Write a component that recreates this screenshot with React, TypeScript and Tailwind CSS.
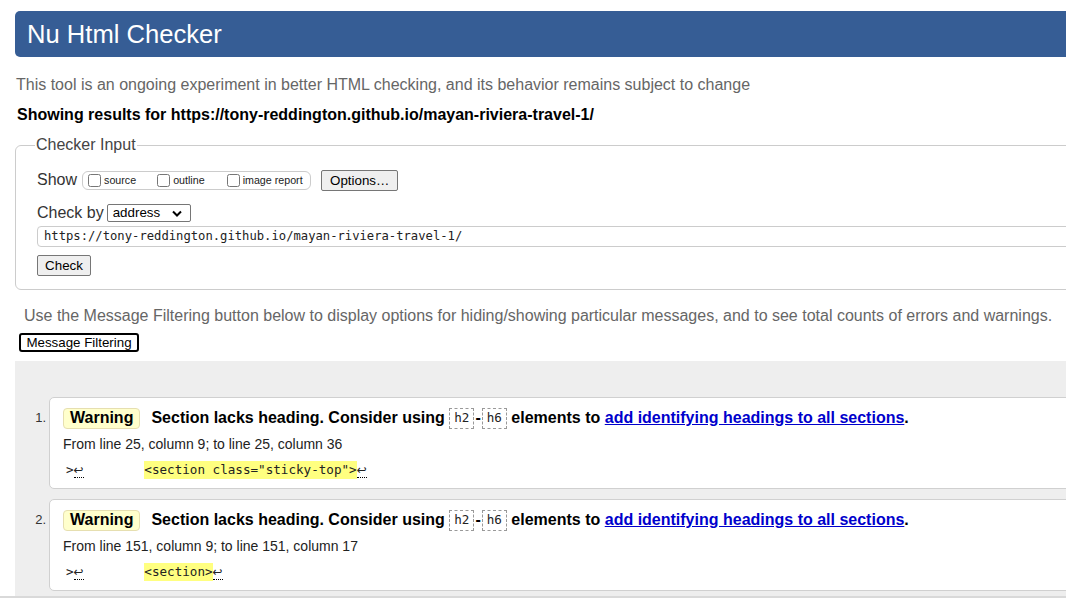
import React from "react";

const SANS = "font-['Liberation_Sans',Arial,sans-serif]";
const MONO = "font-['DejaVu_Sans_Mono',monospace]";

function Lf() {
  return (
    <span className="font-['DejaVu_Sans',sans-serif] text-[12px] border-b border-dotted border-black leading-[14px]">
      ↩
    </span>
  );
}

function Code({ children }: { children: React.ReactNode }) {
  return (
    <span
      className={`${MONO} inline-flex items-center h-[21px] px-[4px] border border-dashed border-[#999] text-[12.6px] font-normal text-[#222] bg-white`}
    >
      {children}
    </span>
  );
}

function Message({
  n,
  from,
  extract,
}: {
  n: number;
  from: string;
  extract: string;
}) {
  return (
    <div className="flex">
      <div className="w-[34px] shrink-0 pt-[8px]">
        <div className="h-[26px] flex items-center justify-end pr-[3px] text-[13px] text-[#333]">
          {n}.
        </div>
      </div>
      <div className="flex-1 mr-[-20px] bg-white border border-[#d0d0d0] rounded-l-[5px] pl-[13px] pt-[7px] pb-[5px]">
        <div className="h-[26px] flex items-center text-[16px] font-bold text-black whitespace-nowrap">
          <span className="inline-flex items-center h-[21px] px-[6px] bg-[#ffffcc] border border-[#e6dfb0] rounded-[4px]">
            Warning
          </span>
          <span className="ml-[11px]">Section lacks heading. Consider using&nbsp;</span>
          <Code>h2</Code>
          <span className="mx-[1px]">-</span>
          <Code>h6</Code>
          <span>&nbsp;elements to&nbsp;</span>
          <a className="text-[#0000cc] underline" href="#">
            add identifying headings to all sections
          </a>
          <span>.</span>
        </div>
        <div className="h-[26px] flex items-center text-[14px] text-[#222]">{from}</div>
        <div className={`h-[26px] flex items-center ${MONO} text-[12.6px] text-[#222] whitespace-pre pl-[3px]`}>
          <span>&gt;</span>
          <Lf />
          <span>{"        "}</span>
          <span className="bg-[#ffff80] leading-[18px]">{extract}</span>
          <Lf />
        </div>
      </div>
    </div>
  );
}

export default function App() {
  return (
    <div className={`${SANS} w-full h-[598px] overflow-hidden bg-white flex flex-col`}>
      <div className="flex-1 overflow-hidden">
        <div className="mt-[11px] ml-[15px] mr-[-20px] h-[46px] bg-[#365d95] rounded-l-[5px] pl-[12px] text-white text-[25.6px] leading-[46px]">
          Nu Html Checker
        </div>
        <p className="mt-[18px] ml-[16px] text-[16px] leading-[20px] text-[#666] whitespace-nowrap">
          This tool is an ongoing experiment in better HTML checking, and its behavior remains subject to change
        </p>
        <p className="mt-[10px] ml-[17px] text-[16px] leading-[20px] font-bold text-black whitespace-nowrap">
          Showing results for https://tony-reddington.github.io/mayan-riviera-travel-1/
        </p>
        <fieldset className="mt-[11px] ml-[15px] mr-[-20px] border border-[#cccccc] rounded-l-[6px] pl-[21px] pt-[15px] pb-[13px]">
          <legend className="-ml-[2px] px-[1px] text-[16px] leading-[18px] text-[#444]">Checker Input</legend>
          <div className="h-[22px] flex items-center">
            <span className="text-[16px] text-[#333]">Show</span>
            <div className="ml-[5px] h-[19px] w-[229px] shrink-0 border border-[#cccccc] rounded-[6px] flex items-center pl-[5px] text-[10.7px] text-[#222] whitespace-nowrap">
              <input type="checkbox" className="m-0 w-[13px] h-[13px] shrink-0" readOnly />
              <span className="ml-[3px]">source</span>
              <input type="checkbox" className="ml-[21px] w-[13px] h-[13px] shrink-0" readOnly />
              <span className="ml-[3px]">outline</span>
              <input type="checkbox" className="ml-[22px] w-[13px] h-[13px] shrink-0" readOnly />
              <span className="ml-[3px]">image report</span>
            </div>
            <button className="ml-[10px] h-[21px] px-[8px] bg-[#efefef] border border-[#767676] rounded-[2px] text-[13.33px] text-black">
              Options…
            </button>
          </div>
          <div className="mt-[11px] h-[22px] flex items-center">
            <span className="text-[16px] text-[#333]">Check by</span>
            <div className="ml-[3px] h-[18px] w-[84px] border border-[#767676] rounded-[2px] flex items-center pl-[5px] text-[13.33px] text-black bg-white">
              <span>address</span>
              <svg className="ml-auto mr-[8px]" width="10" height="7" viewBox="0 0 10 7">
                <path d="M1 1.5 L5 5.5 L9 1.5" fill="none" stroke="#000" strokeWidth="2" />
              </svg>
            </div>
          </div>
          <div className={`mt-[2px] h-[21px] border border-[#cccccc] rounded-l-[4px] flex items-center pl-[6px] ${MONO} text-[12.2px] text-[#222]`}>
            https://tony-reddington.github.io/mayan-riviera-travel-1/
          </div>
          <button className="mt-[8px] h-[21px] w-[54px] bg-[#efefef] border border-[#767676] rounded-[2px] text-[13.33px] text-black block">
            Check
          </button>
        </fieldset>
        <p className="mt-[16px] ml-[24px] text-[16px] leading-[20px] text-[#666] whitespace-nowrap">
          Use the Message Filtering button below to display options for hiding/showing particular messages, and to see total counts of errors and warnings.
        </p>
        <button className="mt-[7px] ml-[19px] h-[19px] w-[120px] border-2 border-black rounded-[3px] bg-white text-[13.33px] text-black flex items-center justify-center">
          Message Filtering
        </button>
        <div className="mt-[9px] ml-[15px] bg-[#eeeeee] pt-[36px] pb-[10px] flex flex-col gap-[10px]">
          <Message n={1} from="From line 25, column 9; to line 25, column 36" extract={'<section class="sticky-top">'} />
          <Message n={2} from="From line 151, column 9; to line 151, column 17" extract={"<section>"} />
        </div>
      </div>
      <div className="h-[2px] bg-[#d9d9d9]" />
    </div>
  );
}
